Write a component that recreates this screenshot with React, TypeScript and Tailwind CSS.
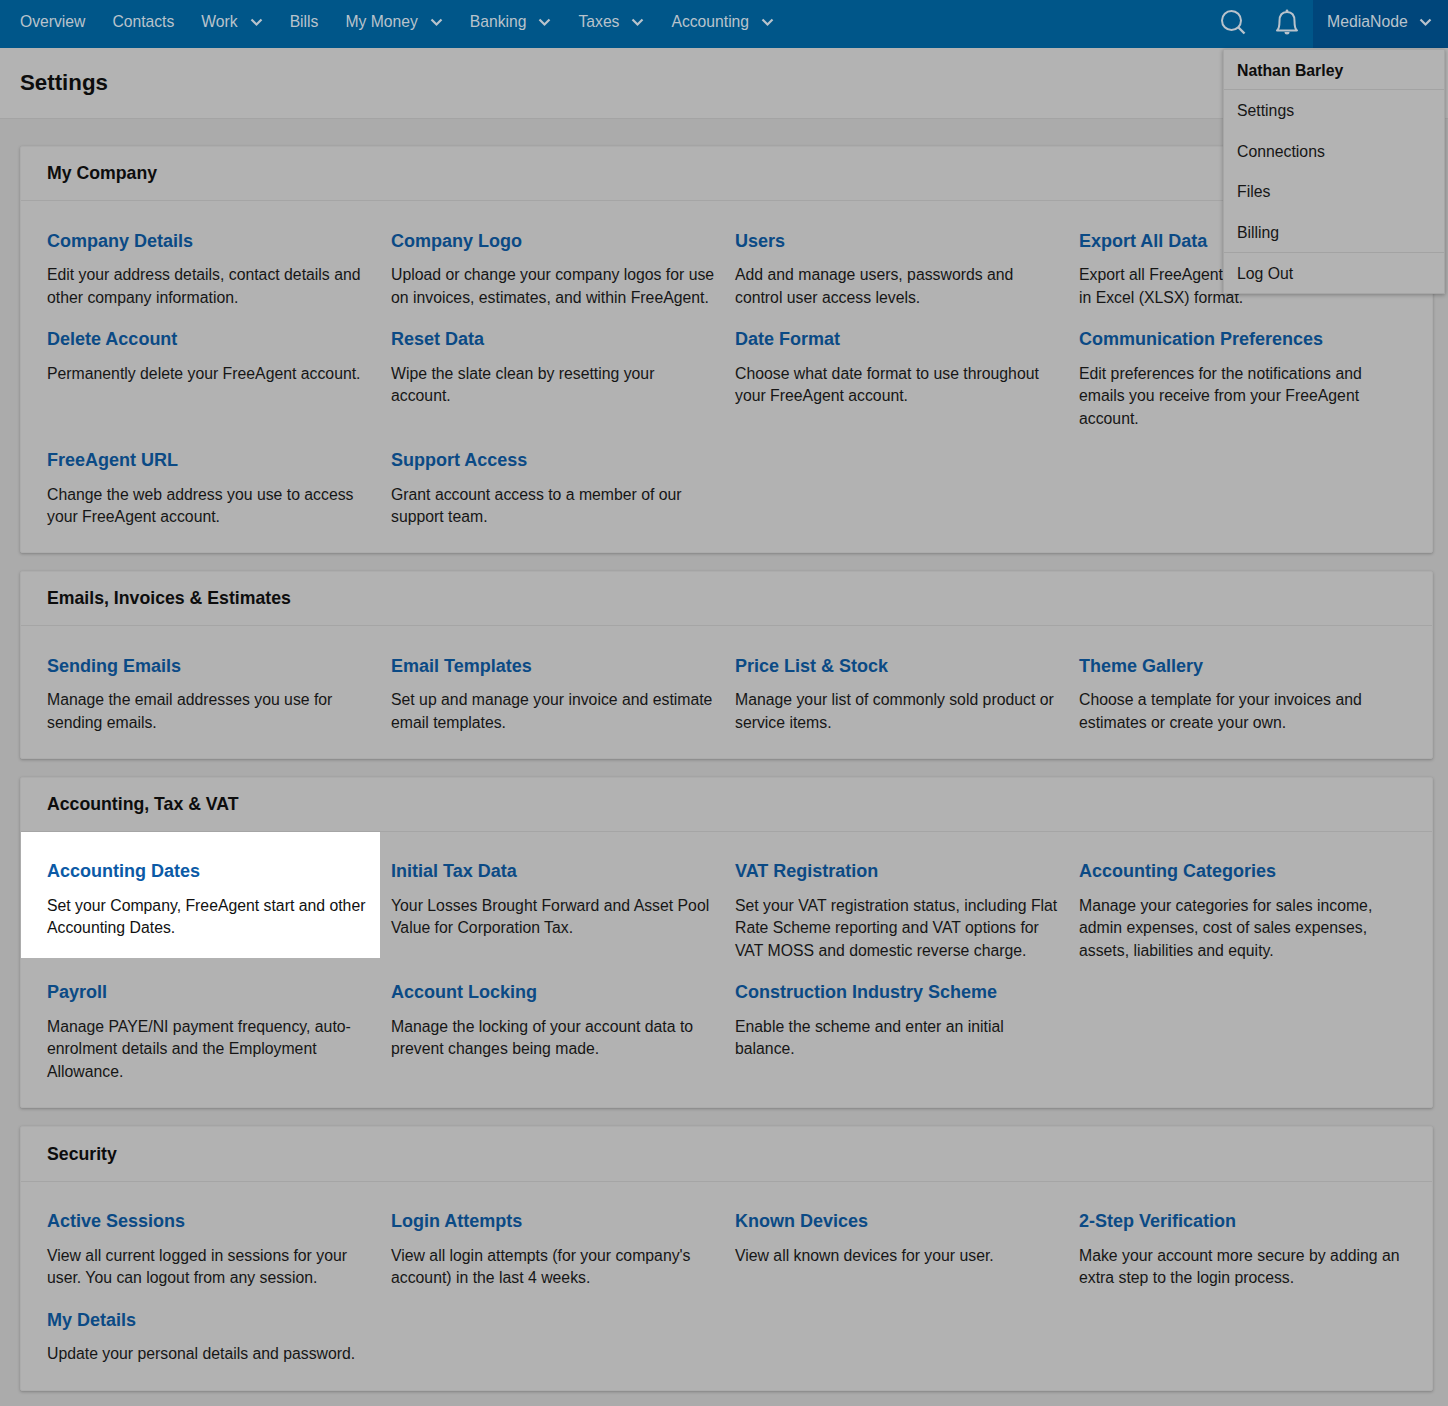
import React from "react";

type Item = { t: string; d: string; hl?: boolean };
const sections: { title: string; items: Item[] }[] = [
  {
    title: "My Company",
    items: [
      { t: "Company Details", d: "Edit your address details, contact details and other company information." },
      { t: "Company Logo", d: "Upload or change your company logos for use on invoices, estimates, and within FreeAgent." },
      { t: "Users", d: "Add and manage users, passwords and control user access levels." },
      { t: "Export All Data", d: "Export all FreeAgent data as a ZIP of CSVs or in Excel (XLSX) format." },
      { t: "Delete Account", d: "Permanently delete your FreeAgent account." },
      { t: "Reset Data", d: "Wipe the slate clean by resetting your account." },
      { t: "Date Format", d: "Choose what date format to use throughout your FreeAgent account." },
      { t: "Communication Preferences", d: "Edit preferences for the notifications and emails you receive from your FreeAgent account." },
      { t: "FreeAgent URL", d: "Change the web address you use to access your FreeAgent account." },
      { t: "Support Access", d: "Grant account access to a member of our support team." },
    ],
  },
  {
    title: "Emails, Invoices & Estimates",
    items: [
      { t: "Sending Emails", d: "Manage the email addresses you use for sending emails." },
      { t: "Email Templates", d: "Set up and manage your invoice and estimate email templates." },
      { t: "Price List & Stock", d: "Manage your list of commonly sold product or service items." },
      { t: "Theme Gallery", d: "Choose a template for your invoices and estimates or create your own." },
    ],
  },
  {
    title: "Accounting, Tax & VAT",
    items: [
      { t: "Accounting Dates", d: "Set your Company, FreeAgent start and other Accounting Dates.", hl: true },
      { t: "Initial Tax Data", d: "Your Losses Brought Forward and Asset Pool Value for Corporation Tax." },
      { t: "VAT Registration", d: "Set your VAT registration status, including Flat Rate Scheme reporting and VAT options for VAT MOSS and domestic reverse charge." },
      { t: "Accounting Categories", d: "Manage your categories for sales income, admin expenses, cost of sales expenses, assets, liabilities and equity." },
      { t: "Payroll", d: "Manage PAYE/NI payment frequency, auto-enrolment details and the Employment Allowance." },
      { t: "Account Locking", d: "Manage the locking of your account data to prevent changes being made." },
      { t: "Construction Industry Scheme", d: "Enable the scheme and enter an initial balance." },
    ],
  },
  {
    title: "Security",
    items: [
      { t: "Active Sessions", d: "View all current logged in sessions for your user. You can logout from any session." },
      { t: "Login Attempts", d: "View all login attempts (for your company's account) in the last 4 weeks." },
      { t: "Known Devices", d: "View all known devices for your user." },
      { t: "2-Step Verification", d: "Make your account more secure by adding an extra step to the login process." },
      { t: "My Details", d: "Update your personal details and password." },
    ],
  },
];

const nav: { label: string; caret?: boolean }[] = [
  { label: "Overview" },
  { label: "Contacts" },
  { label: "Work", caret: true },
  { label: "Bills" },
  { label: "My Money", caret: true },
  { label: "Banking", caret: true },
  { label: "Taxes", caret: true },
  { label: "Accounting", caret: true },
];

function Chevron() {
  return (
    <svg width="13" height="9" viewBox="0 0 13 9" fill="none" className="shrink-0">
      <path d="M1.5 1.5 L6.5 6.5 L11.5 1.5" stroke="#b9c3cc" strokeWidth="2.2" />
    </svg>
  );
}

export default function App() {
  return (
    <div className="relative min-h-[1406px] bg-[#ababab] font-['Liberation_Sans',Arial,sans-serif] text-[15.8px] leading-[22.5px] text-[#161616]">
      <header className="flex h-12 items-center bg-[#005689] text-[#b9c3cc]">
        <nav className="flex flex-1 items-center gap-[27px] pb-1 pl-5 text-[15.7px]">
          {nav.map((n) => (
            <span key={n.label} className="flex items-center gap-3">
              {n.label}
              {n.caret && <Chevron />}
            </span>
          ))}
        </nav>
        <div className="flex items-center gap-[29px] pr-[14px]">
          <svg width="26" height="26" viewBox="0 0 26 26" fill="none" className="mb-1">
            <circle cx="11.5" cy="11.5" r="9.5" stroke="#b9c3cc" strokeWidth="2" />
            <path d="M18.5 18.5 L24.5 24.5" stroke="#b9c3cc" strokeWidth="2.4" />
          </svg>
          <svg width="24" height="27" viewBox="0 0 24 27" fill="none" className="mb-[3px]">
            <path
              d="M2 21.5 C4.5 19.5 4.5 16.5 4.5 12 C4.5 6.5 7 3 12 3 C17 3 19.5 6.5 19.5 12 C19.5 16.5 19.5 19.5 22 21.5 Z"
              stroke="#b9c3cc"
              strokeWidth="2"
              strokeLinejoin="round"
            />
            <path d="M9.5 23 a2.5 2.5 0 0 0 5 0 Z" fill="#b9c3cc" />
            <circle cx="12" cy="2" r="1.4" fill="#b9c3cc" />
          </svg>
        </div>
        <div className="flex h-12 w-[135px] items-center gap-[11px] bg-[#00467b] pb-1 pl-[14px]">
          MediaNode
          <Chevron />
        </div>
      </header>

      <div className="flex h-[71px] items-center border-b border-[#a4a4a4] bg-[#b3b3b3] pl-5">
        <h1 className="text-[22.3px] font-bold leading-7 text-[#0d0d0d]">Settings</h1>
      </div>

      <main className="flex flex-col gap-[18px] pl-5 pr-[15px] pt-[27px]">
        {sections.map((s) => (
          <section key={s.title} className="rounded-[2px] border border-[#acacac] bg-[#b2b2b2] shadow-[0_1px_3px_rgba(0,0,0,0.25)] last:pb-px last:pt-px">
            <h2 className="flex h-[54px] items-center border-b border-[#a5a5a5] pl-[26px] text-[17.7px] font-bold text-[#0d0d0d]">
              {s.title}
            </h2>
            <div className="grid grid-cols-[344px_344px_344px_344px] pb-[5.5px] pl-[26px] pt-[27.5px]">
              {s.items.map((it) => (
                <div key={it.t} className="relative pb-[18px] pr-[19px]">
                  {it.hl && <div className="absolute -left-[26px] -top-[27.5px] h-[126px] w-[359px] bg-white" />}
                  <h3 className={`relative text-lg font-bold leading-6 ${it.hl ? "text-[#0b5aa6]" : "text-[#0b4a85]"}`}>{it.t}</h3>
                  <p className={`relative mt-[11.5px] ${it.hl ? "text-[#111111]" : ""}`}>{it.d}</p>
                </div>
              ))}
            </div>
          </section>
        ))}
      </main>

      <div className="absolute left-[1223px] top-[49px] w-[222px] border border-[#a6a6a6] bg-[#b3b3b3] shadow-[0_1px_4px_rgba(0,0,0,0.3)]">
        <div className="border-b border-[#a3a3a3] px-[13px] pb-[6.5px] pt-[10px] font-bold text-[#0d0d0d]">Nathan Barley</div>
        {["Settings", "Connections", "Files"].map((x) => (
          <div key={x} className="px-[13px] pb-[8px] pt-[10px]">{x}</div>
        ))}
        <div className="border-b border-[#a3a3a3] px-[13px] pb-[8px] pt-[10px]">Billing</div>
        <div className="px-[13px] pb-[7px] pt-[10px]">Log Out</div>
      </div>
    </div>
  );
}
